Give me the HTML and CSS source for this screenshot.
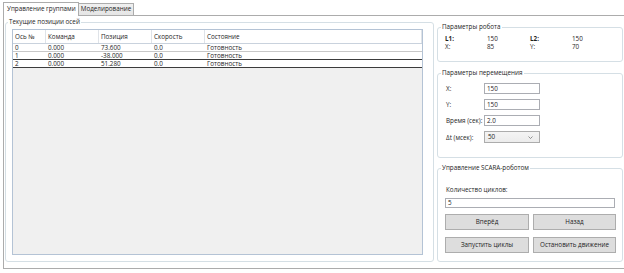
FILE: index.html
```html
<!DOCTYPE html>
<html lang="ru">

<head>
    <meta charset="UTF-8">
    <meta name="viewport" content="width=device-width, initial-scale=1.0">
    <title>SCARA</title>
    <link rel="stylesheet" href="styles.css">
</head>

<body>
    <div class="tabs">
        <div class="tab active">Управление группами</div>
        <div class="tab">Моделирование</div>
    </div>
    <div class="panel">
        <fieldset class="group positions">
            <legend>Текущие позиции осей</legend>
            <div class="grid">
                <div class="row head">
                    <div class="c1">Ось №</div>
                    <div class="c2">Команда</div>
                    <div class="c3">Позиция</div>
                    <div class="c4">Скорость</div>
                    <div class="c5">Состояние</div>
                </div>
                <div class="row light">
                    <div class="c1">0</div>
                    <div class="c2">0.000</div>
                    <div class="c3">73.600</div>
                    <div class="c4">0.0</div>
                    <div class="c5">Готовность</div>
                </div>
                <div class="row">
                    <div class="c1">1</div>
                    <div class="c2">0.000</div>
                    <div class="c3">-38.000</div>
                    <div class="c4">0.0</div>
                    <div class="c5">Готовность</div>
                </div>
                <div class="row">
                    <div class="c1">2</div>
                    <div class="c2">0.000</div>
                    <div class="c3">51.280</div>
                    <div class="c4">0.0</div>
                    <div class="c5">Готовность</div>
                </div>
            </div>
        </fieldset>

        <div class="side">
            <fieldset class="group robot">
                <legend>Параметры робота</legend>
                <div class="params">
                    <b>L1:</b><span>150</span><b>L2:</b><span>150</span>
                    <span>X:</span><span>85</span><span>Y:</span><span>70</span>
                </div>
            </fieldset>

            <fieldset class="group move">
                <legend>Параметры перемещения</legend>
                <div class="form">
                    <label>X:</label><div class="field">150</div>
                    <label>Y:</label><div class="field">150</div>
                    <label>Время (сек):</label><div class="field">2.0</div>
                    <label>Δt (мсек):</label>
                    <div class="combo">50
                        <svg width="5" height="3" viewBox="0 0 5 3"><polyline points="0.5,0.5 2.5,2.5 4.5,0.5" fill="none" stroke="#777" stroke-width="0.8"/></svg>
                    </div>
                </div>
            </fieldset>

            <fieldset class="group scara">
                <legend>Управление SCARA-роботом</legend>
                <div class="caption">Количество циклов:</div>
                <div class="field wide">5</div>
                <div class="buttons">
                    <div class="btn">Вперёд</div>
                    <div class="btn">Назад</div>
                    <div class="btn">Запустить циклы</div>
                    <div class="btn">Остановить движение</div>
                </div>
            </fieldset>
        </div>
    </div>
</body>

</html>
```

FILE: styles.css
```css
body {
    margin: 0;
    background-color: #fff;
    font-family: "Open Sans", "Noto Sans", sans-serif;
    font-size: 6.3px;
    color: #1e1e1e;
    overflow: hidden;
    white-space: nowrap;
}

.tabs {
    display: flex;
    align-items: flex-end;
    padding: 2px 0 0 3px;
    height: 13px;
}

.tab {
    border: 1px solid #acacac;
    border-bottom: none;
    height: 11px;
    line-height: 10px;
    padding: 0 2px;
    background: linear-gradient(#f0f0f0, #e5e5e5);
    margin-left: -1px;
}

.tab.active {
    height: 13px;
    line-height: 12px;
    margin-left: 0;
    padding: 0 2px 0 3px;
    background: #fff;
    position: relative;
    z-index: 1;
    margin-bottom: -1px;
}

.panel {
    display: flex;
    align-items: flex-start;
    margin-left: 3px;
    width: 624px;
    height: 254px;
    box-sizing: border-box;
    border: 1px solid #acacac;
    padding: 1px 0 0 1px;
    background: #fff;
}

.group {
    flex: none;
    margin: 0;
    padding: 0 6px 6px;
    border: 1px solid #d5dfe5;
    border-radius: 3px;
    min-width: 0;
    box-sizing: border-box;
}

.group legend {
    padding: 0 1px;
    margin-left: -4px;
    line-height: 10px;
}

.positions {
    width: 429px;
}

.grid {
    margin-top: 2px;
    width: 411px;
    height: 226px;
    box-sizing: border-box;
    border: 1px solid #b4c3d5;
    background: #f0f0f0;
}

.row {
    display: flex;
    background: #fff;
    height: 8px;
    line-height: 7px;
    box-sizing: border-box;
    border-bottom: 1px solid #3c3c3c;
}

.row.light {
    border-bottom-color: #c8c8c8;
}

.row.head {
    height: 14px;
    line-height: 13px;
    border-bottom: 1px solid #c9d2dd;
}

.row>div {
    padding-left: 2px;
    box-sizing: border-box;
}

.row.head>div {
    border-right: 1px solid #dfe3e8;
}

.c1 { width: 33px; }
.c2 { width: 53px; }
.c3 { width: 53px; }
.c4 { width: 53px; }
.c5 { flex: 1; }

.side {
    margin-left: 3px;
    padding-top: 5px;
    width: 186px;
    display: flex;
    flex-direction: column;
}

.robot {
    padding: 3px 7px 10px;
}

.params {
    display: grid;
    grid-template-columns: 42px 43px 42px auto;
    line-height: 8px;
}

.move {
    margin-top: 6px;
    padding: 5px 7px 14px;
}

.form {
    display: grid;
    grid-template-columns: 39px 56px;
    row-gap: 5px;
    align-items: center;
}

.form label {
    padding-left: 1px;
}

.field {
    height: 11px;
    line-height: 9px;
    box-sizing: border-box;
    border: 1px solid #abadb3;
    background: #fff;
    padding-left: 2px;
}

.combo {
    height: 12px;
    line-height: 10px;
    box-sizing: border-box;
    border: 1px solid #acacac;
    background: linear-gradient(#f4f4f4, #ececec);
    padding: 0 6px 0 3px;
    display: flex;
    justify-content: space-between;
    align-items: center;
}

.scara {
    margin-top: 5px;
    padding: 13px 7px 8px;
}

.caption {
    line-height: 8px;
    padding-left: 1px;
}

.field.wide {
    margin-top: 4px;
    height: 10px;
    line-height: 8px;
}

.buttons {
    margin-top: 6px;
    display: grid;
    grid-template-columns: 84px 83px;
    column-gap: 4px;
    row-gap: 7px;
}

.btn {
    height: 16px;
    line-height: 14px;
    box-sizing: border-box;
    border: 1px solid #adadad;
    background: #dddddd;
    text-align: center;
}
```
